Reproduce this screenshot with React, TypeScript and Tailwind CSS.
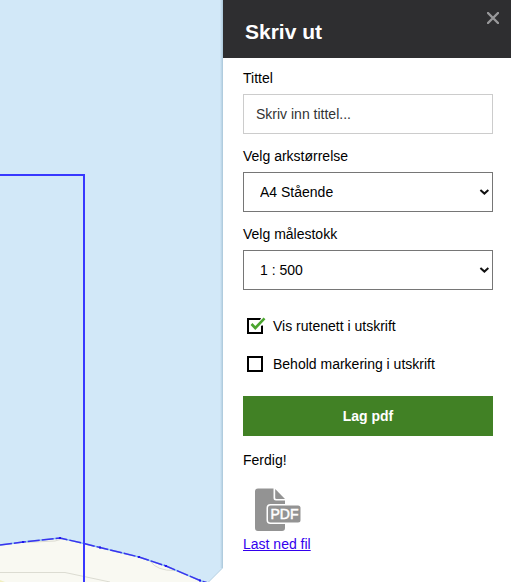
import React, { useState } from 'react';
import { clsx } from 'clsx';

interface SelectFieldProps {
  id: string;
  label: string;
  options: string[];
}

interface CheckFieldProps {
  label: string;
  checked: boolean;
  onChange: (checked: boolean) => void;
}

const PAPER_SIZES = ['A4 Stående', 'A4 Liggende', 'A3 Stående', 'A3 Liggende'];
const SCALES = ['1 : 500', '1 : 1000', '1 : 2000', '1 : 5000'];

const SHORE = 'M0 545 L23 542 L60 538 L84 543.5 L100 547.5 L139 557 L166 566 L200 580.5 L208 583';
const SHORE_POINTS = [
  [23, 542],
  [60, 538],
  [100, 547.5],
  [139, 557],
  [166, 566],
  [200, 580.5],
];

const MapView: React.FC = () => (
  <svg
    viewBox="0 0 223 582"
    preserveAspectRatio="xMaxYMin slice"
    className="block h-full w-full"
    role="img"
    aria-label="Kart"
  >
    <defs>
      <linearGradient id="edge">
        <stop offset="0" stopColor="#8fb0c4" stopOpacity="0" />
        <stop offset="1" stopColor="#8fb0c4" stopOpacity="0.6" />
      </linearGradient>
    </defs>
    <rect width="223" height="582" fill="#d2e8f8" />

    {/* Land and contour lines */}
    <path d={`${SHORE} L0 583 Z`} fill="#f9f9f2" />
    <path d="M0 580 L5 582 H0 Z" fill="#f0efbf" />
    <path d="M0 572.5 H65 L84 576.5 L110 582" fill="none" stroke="#dcdcd2" />
    <path d="M24 542.5 L55 541 L62 539" fill="none" stroke="#dcdcd2" />
    <path d="M150 561 Q157 571 175 570.5" fill="none" stroke="#dcdcd2" />

    {/* Shoreline */}
    <path d={SHORE} fill="none" stroke="#8ec5f0" strokeWidth="1.5" />
    <path d={SHORE} fill="none" stroke="#3a33ee" strokeWidth="1.5" strokeDasharray="12 2" />
    {SHORE_POINTS.map(([x, y]) => (
      <rect key={x} x={x - 1} y={y - 1} width="2" height="2" fill="#1f16ee" />
    ))}

    {/* Print area */}
    <path d="M-2 175 H84 V584" fill="none" stroke="#3838ff" strokeWidth="2" />

    <path d="M223 568 L208 583 H223 Z" fill="#fff" />
    <path d="M222.5 568 L208 582.5" stroke="#bdd3e2" fill="none" />
    <rect x="220" width="3" height="568" fill="url(#edge)" />
  </svg>
);

const SelectField: React.FC<SelectFieldProps> = ({ id, label, options }) => (
  <div className="flex flex-col gap-1.5">
    <label htmlFor={id}>{label}</label>
    <div className="relative">
      <select
        id={id}
        className="block h-10 w-full appearance-none rounded-none border border-[#767676] bg-white px-4 text-black"
      >
        {options.map((option) => (
          <option key={option}>{option}</option>
        ))}
      </select>
      <svg
        viewBox="0 0 10 6"
        className="pointer-events-none absolute inset-y-0 right-1 my-auto h-1.5 w-2.5"
        aria-hidden="true"
      >
        <path d="M1.4 1 L5.4 4.6 L9.4 1" fill="none" stroke="#111" strokeWidth="2" />
      </svg>
    </div>
  </div>
);

const CheckField: React.FC<CheckFieldProps> = ({ label, checked, onChange }) => (
  <label className="flex items-center gap-2.5">
    <span className="relative size-4">
      <input
        type="checkbox"
        checked={checked}
        onChange={(e) => onChange(e.target.checked)}
        className="block size-4 appearance-none border-2 border-black bg-white"
      />
      <svg
        viewBox="0 0 20 20"
        className={clsx(
          'pointer-events-none absolute -top-0.5 left-0 size-5',
          !checked && 'hidden'
        )}
        aria-hidden="true"
      >
        <path d="M12 6 L15 0 H18 V9 L13 10 Z" fill="#fff" />
        <path d="M4.5 8 L8.3 12 L17.5 2.3" fill="none" stroke="#4ba52f" strokeWidth="2.6" />
      </svg>
    </span>
    {label}
  </label>
);

const PdfIcon: React.FC = () => (
  <svg viewBox="0 0 46 43" className="ml-3 h-[43px] w-[46px]" aria-hidden="true">
    <path
      d="M3 0.5 H18.5 V10 Q18.5 12.5 21 12.5 H30 V40 Q30 43 27 43 H3 Q0 43 0 40 V3.5 Q0 0.5 3 0.5 Z"
      fill="#939393"
    />
    <path d="M20.2 1 L30 11 H21.5 Q20.2 11 20.2 9.7 Z" fill="#939393" />
    <rect x="11.5" y="16" width="36" height="20" rx="4" fill="#fff" />
    <rect x="13" y="17.5" width="32.5" height="17" rx="2.5" fill="#939393" />
    <text
      x="29.5"
      y="31"
      textAnchor="middle"
      fill="#fff"
      stroke="#fff"
      strokeWidth="0.5"
      fontSize="14"
      className="font-['Liberation_Sans',Arial,sans-serif]"
    >
      PDF
    </text>
  </svg>
);

export default function App() {
  const [showGrid, setShowGrid] = useState(true);
  const [keepMarking, setKeepMarking] = useState(false);

  return (
    <div className="flex h-screen overflow-hidden bg-white font-['Liberation_Sans',Arial,sans-serif] text-sm text-black">
      <main className="min-w-0 flex-1">
        <MapView />
      </main>

      <aside className="w-72 shrink-0 overflow-y-auto bg-white">
        <header className="relative bg-[#2e2e30] px-[22px] pt-[18px] pb-3">
          <h1 className="text-[21px] leading-7 font-bold text-white">Skriv ut</h1>
          <button type="button" aria-label="Lukk" className="absolute top-3 right-3 size-3">
            <svg viewBox="0 0 12 12" className="block size-3" aria-hidden="true">
              <path
                d="M1 1 L11 11 M11 1 L1 11"
                stroke="#98989a"
                strokeWidth="2.4"
                strokeLinecap="round"
              />
            </svg>
          </button>
        </header>

        <form className="pt-2.5 pr-[18px] pl-5" onSubmit={(e) => e.preventDefault()}>
          <div className="flex flex-col gap-3">
            <div className="flex flex-col gap-1.5">
              <label htmlFor="title">Tittel</label>
              <input
                id="title"
                type="text"
                placeholder="Skriv inn tittel..."
                className="h-10 w-full border border-[#ccc] px-3 placeholder:text-[#333]"
              />
            </div>
            <SelectField id="paper" label="Velg arkstørrelse" options={PAPER_SIZES} />
            <SelectField id="scale" label="Velg målestokk" options={SCALES} />
          </div>

          <div className="mt-[26px] flex flex-col gap-[18px] pl-1">
            <CheckField label="Vis rutenett i utskrift" checked={showGrid} onChange={setShowGrid} />
            <CheckField
              label="Behold markering i utskrift"
              checked={keepMarking}
              onChange={setKeepMarking}
            />
          </div>

          <button type="submit" className="mt-[22px] h-10 w-full bg-[#418125] font-bold text-white">
            Lag pdf
          </button>

          <p className="mt-3.5">Ferdig!</p>
          <a href="#pdf" className="mt-[18px] inline-flex flex-col gap-[3px] text-[#3300ee] underline">
            <PdfIcon />
            Last ned fil
          </a>
        </form>
      </aside>
    </div>
  );
}
